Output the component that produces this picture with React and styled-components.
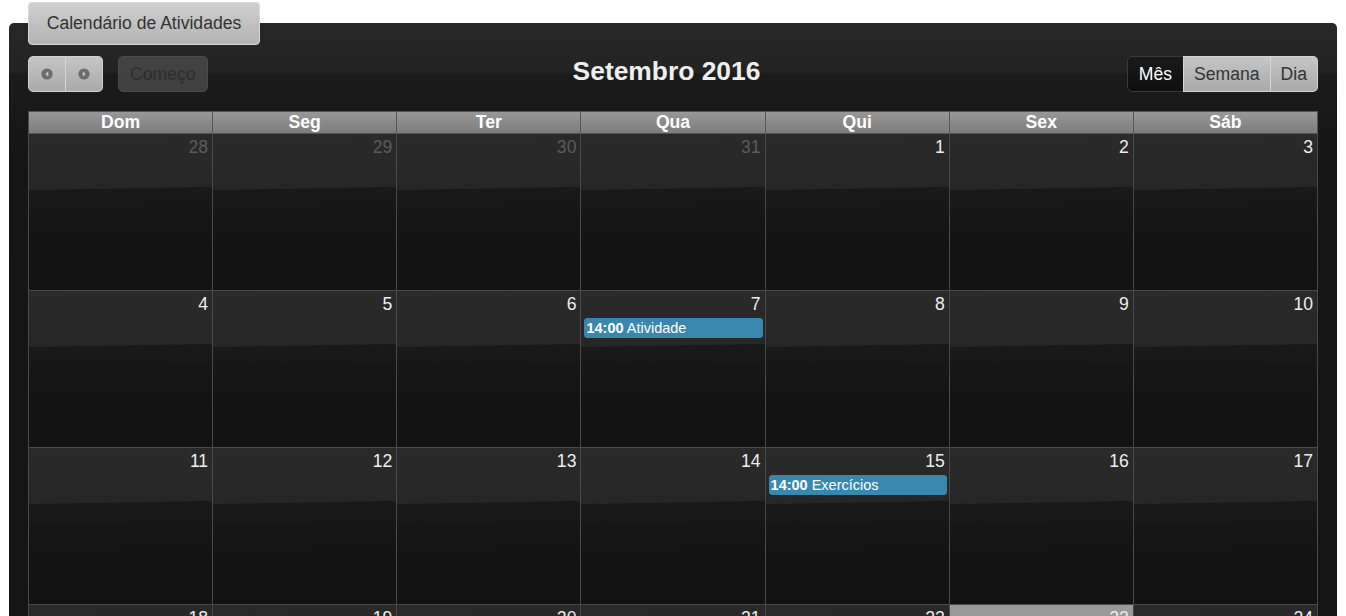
import React from "react";
import styled, { createGlobalStyle } from "styled-components";

const Global = createGlobalStyle`
  html, body { margin: 0; padding: 0; background: #fff; }
  body { font-family: "Liberation Sans", Arial, sans-serif; }
  * { box-sizing: border-box; }
`;

const Page = styled.div`
  padding: 2px 9px 0 9px;
`;

const Tab = styled.div`
  position: relative;
  z-index: 2;
  margin-left: 19px;
  width: 232px;
  height: 43px;
  display: flex;
  align-items: center;
  justify-content: center;
  font-size: 17.6px;
  color: #333;
  background: linear-gradient(#cfcfcf, #b3b3b3);
  border: 1px solid #d8d8d8;
  border-radius: 4px;
`;

const Panel = styled.div`
  margin-top: -22px;
  border-radius: 5px 5px 0 0;
  background: linear-gradient(#272727 0, #232323 48px, #1b1b1b 52px, #151515 140px, #141414 100%);
  padding: 33px 19px 0 19px;
  min-height: 600px;
`;

const Toolbar = styled.div`
  display: flex;
  align-items: center;
  justify-content: space-between;
  height: 36px;
  margin-bottom: 19px;
`;

const Left = styled.div`
  display: flex;
  gap: 15px;
  width: 300px;
`;

const Right = styled.div`
  display: flex;
  justify-content: flex-end;
  width: 300px;
`;

const Group = styled.div`
  display: flex;
`;

const Btn = styled.button`
  height: 36px;
  ${(p) => (p.$w ? `width: ${p.$w}px; padding: 0;` : `padding: 0 ${p.$pad || 11}px;`)}
  font-family: "Liberation Sans", Arial, sans-serif;
  font-size: 17.6px;
  display: flex;
  align-items: center;
  justify-content: center;
  color: ${(p) => (p.$active ? "#fff" : "#333")};
  background: ${(p) =>
    p.$active
      ? "linear-gradient(#1a1a1a, #0e0e0e)"
      : p.$disabled
      ? "#4d4d4d"
      : "linear-gradient(#c6c6c6, #a9a9a9)"};
  border: 1px solid ${(p) => (p.$active ? "#3a3a3a" : p.$disabled ? "#5a5a5a" : "#d2d2d2")};
  opacity: ${(p) => (p.$disabled ? 0.75 : 1)};
  border-radius: 0;
  margin: 0;
  &:first-child { border-top-left-radius: 5px; border-bottom-left-radius: 5px; }
  &:last-child { border-top-right-radius: 5px; border-bottom-right-radius: 5px; }
  & + & { border-left-color: ${(p) => (p.$active ? "#3a3a3a" : "#d6d6d6")}; margin-left: -1px; }
`;

const Title = styled.h2`
  margin: 0;
  font-size: 26.4px;
  font-weight: bold;
  color: #eee;
  text-align: center;
  flex: 1;
  padding-right: 13px;
  transform: translateY(-3px);
`;

const Grid = styled.div`
  display: grid;
  grid-template-columns: repeat(7, 1fr);
  border-left: 1px solid #4a4a4a;
`;

const Head = styled.div`
  height: 23px;
  background: linear-gradient(#989898, #7c7c7c);
  border-top: 1px solid #555;
  border-right: 1px solid #555;
  border-bottom: 1px solid #555;
  color: #fff;
  font-weight: bold;
  font-size: 17.6px;
  line-height: 20px;
  text-align: center;
`;

const Cell = styled.div`
  height: 157px;
  border-right: 1px solid #4a4a4a;
  border-bottom: 1px solid #4a4a4a;
  background: ${(p) =>
    p.$today
      ? "linear-gradient(#9a9a9a, #8e8e8e)"
      : "linear-gradient(179deg, #2a2a2a 0, #262626 35%, #191919 35.5%, #131313 70%, #121212 100%)"};
  display: flex;
  flex-direction: column;
`;

const Num = styled.div`
  text-align: right;
  padding: 3px 4px 0 0;
  height: 27px;
  font-size: 17.6px;
  color: ${(p) => (p.$other ? "#5c5c5c" : "#eee")};
`;

const Event = styled.div`
  margin: 0 2px 0 3px;
  height: 20px;
  background: #3a87ad;
  border: 1px solid #3a87ad;
  border-radius: 3px;
  color: #fff;
  font-size: 14.5px;
  line-height: 18px;
  padding-left: 1px;
  white-space: nowrap;
  overflow: hidden;
  b { font-weight: bold; }
`;

const Arrow = ({ dir }) => (
  <svg width="12" height="12" viewBox="0 0 12 12">
    <circle cx="6" cy="6" r="5.6" fill="#6b6b6b" />
    {dir === "left" ? (
      <path d="M7.3 3.3 L4.3 6 L7.3 8.7 Z" fill="#c4c4c4" />
    ) : (
      <path d="M4.7 3.3 L7.7 6 L4.7 8.7 Z" fill="#c4c4c4" />
    )}
  </svg>
);

const days = ["Dom", "Seg", "Ter", "Qua", "Qui", "Sex", "Sáb"];

const weeks = [
  [28, 29, 30, 31, 1, 2, 3],
  [4, 5, 6, 7, 8, 9, 10],
  [11, 12, 13, 14, 15, 16, 17],
  [18, 19, 20, 21, 22, 23, 24],
  [25, 26, 27, 28, 29, 30, 1],
  [2, 3, 4, 5, 6, 7, 8],
];

const events = {
  "1-3": { time: "14:00", title: "Atividade" },
  "2-4": { time: "14:00", title: "Exercícios" },
};

export default function App() {
  return (
    <>
      <Global />
      <Page>
        <Tab>Calendário de Atividades</Tab>
        <Panel>
          <Toolbar>
            <Left>
              <Group>
                <Btn $w={38} aria-label="prev"><Arrow dir="left" /></Btn>
                <Btn $w={38} aria-label="next"><Arrow dir="right" /></Btn>
              </Group>
              <Group>
                <Btn $disabled>Começo</Btn>
              </Group>
            </Left>
            <Title>Setembro 2016</Title>
            <Right>
              <Group>
                <Btn $active $pad={11}>Mês</Btn>
                <Btn $pad={10}>Semana</Btn>
                <Btn $pad={10}>Dia</Btn>
              </Group>
            </Right>
          </Toolbar>
          <Grid>
            {days.map((d) => (
              <Head key={d}>{d}</Head>
            ))}
            {weeks.map((w, wi) =>
              w.map((n, di) => {
                const other = (wi === 0 && n > 20) || (wi >= 4 && n < 15 && wi * 7 + di > 30);
                const ev = events[`${wi}-${di}`];
                return (
                  <Cell key={`${wi}-${di}`} $today={wi === 3 && di === 5}>
                    <Num $other={other}>{n}</Num>
                    {ev && (
                      <Event>
                        <b>{ev.time}</b> {ev.title}
                      </Event>
                    )}
                  </Cell>
                );
              })
            )}
          </Grid>
        </Panel>
      </Page>
    </>
  );
}
